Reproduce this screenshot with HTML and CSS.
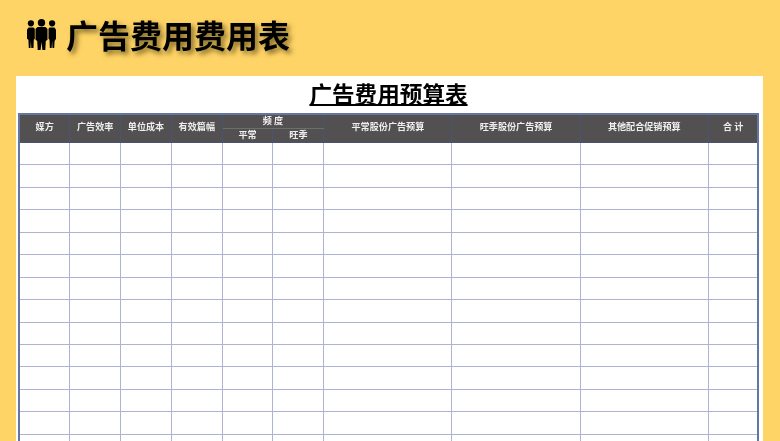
FILE: index.html
```html
<!DOCTYPE html>
<html lang="zh-CN">
<head>
<meta charset="utf-8">
<title>广告费用费用表</title>
<link rel="stylesheet" href="styles.css">
</head>
<body>
<header class="banner">
  <svg class="people" viewBox="0 0 29 31" aria-hidden="true">
    <circle cx="3.900" cy="4.300" r="3.100"/><circle cx="14.500" cy="3.700" r="3.700"/><circle cx="25.100" cy="4.300" r="3.100"/>
    <path d="M1.500 8.500h5l1.300 1.200v10.100l-1 1-.3 8.200H4.300l-.4-7-.4 7H1.800l-.4-8.200L0 19.800v-9z"/>
    <path d="M10.500 8h8l2 2v10.800l-1.700 1.200-.5 9h-2.900l-.9-8-.9 8h-2.900l-.5-9-1.700-1.200V10z"/>
    <path d="M22.500 8.500h5l1.500 2.300v9l-1.400 2.200-.4 7h-1.700l-.4-7-.4 7h-1.900l-.3-8.200-1-1V9.700z"/>
  </svg>
  <h1 class="banner-title">广告费用费用表</h1>
</header>
<main class="sheet">
  <h2 class="sheet-title">广告费用预算表</h2>
  <table class="budget">
    <colgroup>
      <col class="c-narrow"><col class="c-narrow"><col class="c-narrow"><col class="c-narrow"><col class="c-narrow"><col class="c-narrow">
      <col class="c-wide"><col class="c-wide"><col class="c-wide"><col class="c-total">
    </colgroup>
    <thead>
      <tr>
        <th rowspan="2" class="lift">媒方</th>
        <th rowspan="2" class="lift">广告效率</th>
        <th rowspan="2" class="lift">单位成本</th>
        <th rowspan="2" class="lift">有效篇幅</th>
        <th colspan="2" class="split">频 度</th>
        <th rowspan="2" class="lift">平常股份广告预算</th>
        <th rowspan="2" class="lift">旺季股份广告预算</th>
        <th rowspan="2" class="lift">其他配合促销预算</th>
        <th rowspan="2" class="lift">合 计</th>
      </tr>
      <tr>
        <th class="sub">平常</th>
        <th class="sub">旺季</th>
      </tr>
    </thead>
    <tbody id="rows"></tbody>
  </table>
</main>
<script src="rows.js"></script>
</body>
</html>
```
FILE: rows.js
```js
var body = document.getElementById('rows');
for (var r = 0; r < 14; r++) {
  var tr = document.createElement('tr');
  for (var c = 0; c < 10; c++) tr.appendChild(document.createElement('td'));
  body.appendChild(tr);
}
```
FILE: styles.css
```css
* { box-sizing: border-box; }
html, body { margin: 0; height: 100%; overflow: hidden; }
body {
  background: #ffd466;
  font-family: "Noto Sans CJK SC", "Liberation Sans", sans-serif;
  display: flex;
  flex-direction: column;
  padding: 0 17px 0 16px;
}
.banner {
  height: 76px;
  display: flex;
  align-items: center;
  padding: 0 0 8px 11px;
  gap: 10px;
}
.people { width: 29px; height: 31px; fill: #000; flex: none; }
.banner-title {
  margin: 0;
  font-size: 32px;
  line-height: 40px;
  font-weight: 700;
  color: #000;
  text-shadow: 3px 3px 5px rgba(70, 55, 10, .7);
  filter: blur(.35px);
}
.sheet {
  flex: 1;
  background: #fff;
  padding: 0 4px 0 2px;
  min-height: 0;
  overflow: hidden;
}
.sheet-title {
  margin: 0;
  height: 37px;
  text-align: center;
  font-size: 22.600px;
  line-height: 36px;
  font-weight: 700;
  color: #000;
  text-decoration: underline;
  text-decoration-thickness: 2px;
  text-underline-offset: 1px;
  filter: blur(.35px);
}
.budget {
  border-collapse: collapse;
  table-layout: fixed;
  width: 741px;
  border: 2px solid #64779f;
  filter: blur(.4px);
}
.c-narrow { width: 50.800px; }
.c-wide { width: 128.200px; }
.c-total { width: 50px; }
th {
  background: #525050;
  color: #efefef;
  font-size: 9.100px;
  font-weight: 700;
  height: 13px;
  padding: 0 0 2px;
  text-align: center;
  line-height: 11px;
  border: 1px solid #4a5470;
}
th.lift { padding-bottom: 5px; }
thead tr:first-child th { border-top-color: #3f4f78; }
.split { border-bottom: 1px solid #6d6d6d; }
td {
  height: 22.450px;
  padding: 0;
  border: 1px solid #adb3d0;
  background: #fff;
}
```
